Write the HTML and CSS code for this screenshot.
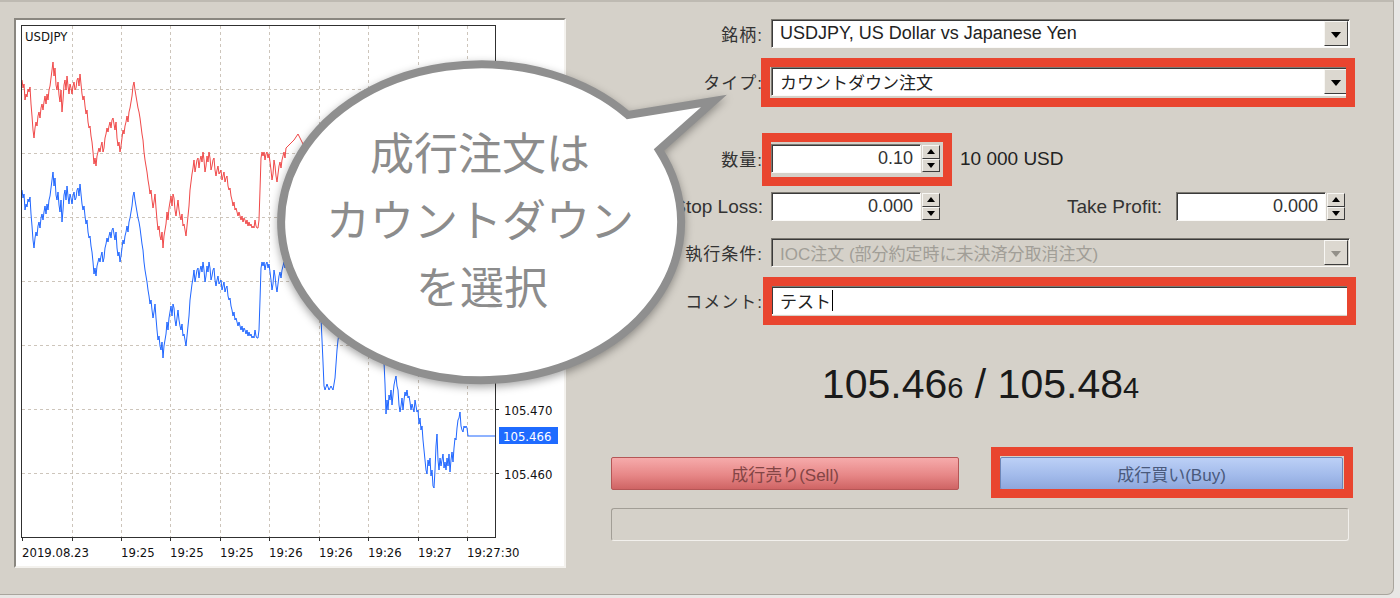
FILE: index.html
```html
<!DOCTYPE html>
<html lang="ja">
  <head>
    <meta charset="UTF-8" />
    <meta name="viewport" content="width=device-width, initial-scale=1.0" />
    <title>新規注文</title>
    <link rel="stylesheet" href="styles.css">
  </head>
  <body>
    <div class="window">
      <div class="chart">
        <svg width="548" height="546" viewBox="16 20 548 546">
          <defs>
            <polyline id="tick" points="22,190 23,198 24,194 25,210 26,204 27,207 28,199 29,202 30,197 31,214 32,226 33,240 34,248 35,238 36,232 37,236 38,226 39,222 40,228 41,218 42,214 43,220 44,212 45,206 46,214 47,204 48,210 49,200 50,196 51,188 52,180 53,172 54,186 55,178 56,195 57,200 58,192 59,205 60,212 61,200 62,222 63,210 64,195 65,190 66,200 67,186 68,196 69,204 70,194 71,198 72,204 73,196 74,192 75,200 76,198 77,190 78,188 79,196 80,184 81,194 82,204 83,210 84,206 85,216 86,224 87,220 88,232 89,238 90,236 91,246 92,252 93,262 94,274 95,268 96,276 97,266 98,262 99,258 100,262 101,256 102,252 103,262 104,258 105,248 106,244 107,238 108,242 109,236 110,232 111,238 112,230 113,228 114,234 115,240 116,232 117,248 118,256 119,252 120,262 121,256 122,248 123,240 124,244 125,236 126,232 127,226 128,232 129,222 130,218 131,212 132,206 133,196 134,192 135,200 136,206 137,212 138,218 139,222 140,228 141,236 142,244 143,250 144,262 145,270 146,276 147,282 148,290 149,296 150,304 151,300 152,310 153,318 154,312 155,304 156,318 157,330 158,340 159,336 160,346 161,350 162,342 163,358 164,346 165,340 166,334 167,322 168,330 169,318 170,312 171,306 172,316 173,304 174,308 175,320 176,326 177,318 178,310 179,320 180,326 181,330 182,324 183,336 184,334 185,340 186,346 187,336 188,326 189,316 190,300 191,292 192,284 193,278 194,270 195,282 196,276 197,270 198,268 199,278 200,270 201,266 202,272 203,262 204,270 205,282 206,276 207,266 208,272 209,262 210,268 211,280 212,276 213,270 214,268 215,280 216,286 217,280 218,276 219,284 220,282 221,280 222,290 223,286 224,282 225,292 226,288 227,286 228,296 229,300 230,298 231,306 232,310 233,316 234,312 235,320 236,318 237,322 238,326 239,322 240,326 241,330 242,326 243,332 244,328 245,330 246,334 247,330 248,336 249,332 250,336 251,334 252,338 253,336 254,338 255,330 256,336 257,338 258,338 259,330 260,300 261,268 262,262 263,266 264,262 265,270 266,264 267,262 268,268 269,264 270,272 271,280 272,290 273,284 274,270 275,276 276,286 277,292 278,284 279,276 280,272 281,278 282,270 283,266 284,262 285,268 286,258 290,254 294,250 298,244 302,252 306,260 310,270 314,286 318,300 321,318 322,340 323,362 324,386 325,390 327,384 329,390 331,386 333,390 335,378 336,364 337,350 338,340 339,334 342,318 348,300 356,292 364,298 372,314 380,338 384,362 385,384 386,414 387,400 388,410 389,395 390,400 391,390 392,405 393,395 394,385 395,380 396,376 397,386 398,390 399,405 400,412 401,406 402,398 403,410 404,400 405,392 406,396 407,390 408,398 409,396 410,402 411,410 412,404 413,408 414,412 415,400 416,406 417,412 418,410 419,424 420,418 421,430 422,426 423,440 424,450 425,460 426,470 427,474 428,460 429,466 430,458 431,476 432,470 433,486 434,488 435,470 436,446 437,434 438,460 439,470 440,458 441,466 442,460 443,454 444,468 445,462 446,470 447,458 448,466 449,454 450,472 451,460 452,452 453,462 454,448 455,438 456,440 457,428 458,420 459,418 460,412 461,426 462,430 463,432 464,426 465,428 466,426 467,428 468,436 495,436" />
          </defs>

          <g class="grid">
            <line x1="72.5" y1="26" x2="72.5" y2="537" />
            <line x1="121.5" y1="26" x2="121.5" y2="537" />
            <line x1="170.5" y1="26" x2="170.5" y2="537" />
            <line x1="220.5" y1="26" x2="220.5" y2="537" />
            <line x1="269.5" y1="26" x2="269.5" y2="537" />
            <line x1="319.5" y1="26" x2="319.5" y2="537" />
            <line x1="368.5" y1="26" x2="368.5" y2="537" />
            <line x1="418.5" y1="26" x2="418.5" y2="537" />
            <line x1="467.5" y1="26" x2="467.5" y2="537" />
            <line x1="22" y1="89.5" x2="495" y2="89.5" />
            <line x1="22" y1="153.5" x2="495" y2="153.5" />
            <line x1="22" y1="217.5" x2="495" y2="217.5" />
            <line x1="22" y1="281.5" x2="495" y2="281.5" />
            <line x1="22" y1="345.5" x2="495" y2="345.5" />
            <line x1="22" y1="409.5" x2="495" y2="409.5" />
            <line x1="22" y1="473.5" x2="495" y2="473.5" />
          </g>

          <use href="#tick" class="line-ask" transform="translate(0,-110)" />
          <use href="#tick" class="line-bid" />

          <rect class="frame" x="21.5" y="25.5" width="474" height="512" />

          <g class="ticks">
            <line x1="22.5" y1="537" x2="22.5" y2="541" />
            <line x1="72.5" y1="537" x2="72.5" y2="541" />
            <line x1="121.5" y1="537" x2="121.5" y2="541" />
            <line x1="170.5" y1="537" x2="170.5" y2="541" />
            <line x1="220.5" y1="537" x2="220.5" y2="541" />
            <line x1="269.5" y1="537" x2="269.5" y2="541" />
            <line x1="319.5" y1="537" x2="319.5" y2="541" />
            <line x1="368.5" y1="537" x2="368.5" y2="541" />
            <line x1="418.5" y1="537" x2="418.5" y2="541" />
            <line x1="467.5" y1="537" x2="467.5" y2="541" />
            <line x1="495" y1="409.5" x2="499" y2="409.5" />
            <line x1="495" y1="473.5" x2="499" y2="473.5" />
          </g>

          <g class="axis-text">
            <text x="25" y="41">USDJPY</text>
            <text x="504" y="415">105.470</text>
            <text x="504" y="479">105.460</text>
            <text x="22" y="557">2019.08.23</text>
            <text x="121" y="557">19:25</text>
            <text x="170" y="557">19:25</text>
            <text x="220" y="557">19:25</text>
            <text x="269" y="557">19:26</text>
            <text x="319" y="557">19:26</text>
            <text x="368" y="557">19:26</text>
            <text x="418" y="557">19:27</text>
            <text x="467" y="557">19:27:30</text>
          </g>

          <rect class="bid-box" x="499" y="427" width="59" height="17" />
          <text class="bid-text" x="503" y="441">105.466</text>
        </svg>
      </div>

      <div class="order">
        <div class="row row-symbol">
          <span class="label">銘柄:</span>
          <div class="field select lat">
            <span>USDJPY, US Dollar vs Japanese Yen</span>
            <span class="drop"></span>
          </div>
        </div>

        <div class="row row-type">
          <span class="label">タイプ:</span>
          <div class="field select mark mark-type">
            <span>カウントダウン注文</span>
            <span class="drop"></span>
          </div>
        </div>

        <div class="row row-volume">
          <span class="label">数量:</span>
          <div class="inline">
            <div class="spin mark mark-volume">
              <div class="field spin-input lat">0.10</div>
              <div class="spin-btns">
                <span class="spin-btn spin-up"></span>
                <span class="spin-btn spin-down"></span>
              </div>
            </div>
            <span class="unit">10 000 USD</span>
          </div>
        </div>

        <div class="row row-stops">
          <span class="label label-lat">Stop Loss:</span>
          <div class="inline stops">
            <div class="spin">
              <div class="field spin-input lat">0.000</div>
              <div class="spin-btns">
                <span class="spin-btn spin-up"></span>
                <span class="spin-btn spin-down"></span>
              </div>
            </div>
            <span class="label label-lat stops-label">Take Profit:</span>
            <div class="spin">
              <div class="field spin-input lat">0.000</div>
              <div class="spin-btns">
                <span class="spin-btn spin-up"></span>
                <span class="spin-btn spin-down"></span>
              </div>
            </div>
          </div>
        </div>

        <div class="row row-fill">
          <span class="label">執行条件:</span>
          <div class="field select is-disabled">
            <span>IOC注文 (部分約定時に未決済分取消注文)</span>
            <span class="drop"></span>
          </div>
        </div>

        <div class="row row-comment">
          <span class="label">コメント:</span>
          <div class="field comment mark mark-comment">
            <span>テスト</span>
            <span class="caret"></span>
          </div>
        </div>

        <div class="price">105.46<small>6</small> / 105.48<small>4</small></div>

        <div class="actions">
          <button type="button" class="btn btn-sell">成行売り(Sell)</button>
          <button type="button" class="btn btn-buy mark mark-buy">成行買い(Buy)</button>
        </div>

        <div class="status"></div>
      </div>
    </div>

    <svg class="bubble" width="1400" height="598" viewBox="0 0 1400 598">
      <path class="bubble-shape" d="M 628 115 A 200 158 0 1 0 659 150 L 714 101 Z" />
      <text x="480" y="170">成行注文は</text>
      <text x="480" y="237">カウントダウン</text>
      <text x="482" y="304">を選択</text>
    </svg>
  </body>
</html>
```

FILE: styles.css
```css
* {
  box-sizing: border-box;
}

body {
  margin: 0;
  width: 1400px;
  height: 598px;
  position: relative;
  overflow: hidden;
  background: #e8e7e5;
  font-family: "Liberation Sans", "Noto Sans CJK JP", sans-serif;
  color: #222;
}

.window {
  display: flex;
  align-items: flex-start;
  width: 1394px;
  height: 595px;
  padding: 16px 0 0 14px;
  background: #d5d1c9;
  border-top: 2px solid #bebab2;
  border-right: 1px solid #a9a59d;
  border-bottom: 1px solid #a9a59d;
  border-bottom-right-radius: 7px;
}

/* chart */

.chart {
  flex: none;
  width: 552px;
  height: 550px;
  background: #fff;
  border: 2px solid;
  border-color: #8a8780 #f4f2ee #f4f2ee #8a8780;
}

.chart svg {
  display: block;
}

.grid line {
  stroke: #cdc5bb;
  stroke-width: 1;
  stroke-dasharray: 3 3;
}

.line-ask,
.line-bid {
  fill: none;
  stroke-width: 1;
}

.line-ask {
  stroke: #f04848;
}

.line-bid {
  stroke: #1f66ff;
}

.frame {
  fill: none;
  stroke: #303030;
  stroke-width: 1;
}

.ticks line {
  stroke: #303030;
  stroke-width: 1;
}

.axis-text text,
.bid-text {
  font-family: "DejaVu Sans Condensed", "DejaVu Sans", sans-serif;
  font-size: 13px;
  fill: #111;
}

.bid-box {
  fill: #1f6bff;
}

.bid-text {
  fill: #fff;
}

/* order form */

.order {
  flex: none;
  width: 739px;
  margin-left: 45px;
  display: flex;
  flex-direction: column;
}

.row {
  display: grid;
  grid-template-columns: 152px 579px;
  column-gap: 8px;
  align-items: center;
  height: 29px;
}

.row-symbol { margin-top: 1px; }
.row-type { margin-top: 19px; }
.row-volume { margin-top: 48px; }
.row-stops { margin-top: 19px; }
.row-fill { margin-top: 17px; }
.row-comment { margin-top: 19px; }

.label {
  text-align: right;
  font-size: 17px;
  letter-spacing: 1px;
  color: #333;
  white-space: nowrap;
}

.label-lat {
  font-size: 19px;
  letter-spacing: 0;
}

.lat {
  font-size: 18px;
}

.field {
  position: relative;
  display: flex;
  align-items: center;
  height: 29px;
  padding-left: 8px;
  background: #fff;
  border: 1px solid;
  border-color: #7c7972 #fbfaf8 #fbfaf8 #7c7972;
  box-shadow: inset 1px 1px 0 #3a3a3a;
  font-size: 17px;
  white-space: nowrap;
}

.field.lat {
  font-size: 18px;
}

.drop {
  display: flex;
  align-items: center;
  justify-content: center;
  width: 24px;
  height: 25px;
  margin-left: auto;
  margin-right: 1px;
  background: #dcd8d0;
  border: 1px solid;
  border-color: #f8f7f4 #3c3c3c #3c3c3c #f8f7f4;
}

.drop::before {
  content: "";
  border-left: 5px solid transparent;
  border-right: 5px solid transparent;
  border-top: 6px solid #000;
  margin-top: 2px;
}

.select.is-disabled {
  background: #d5d1c9;
  color: #a19e97;
}

.select.is-disabled .drop::before {
  border-top-color: #939089;
}

.inline {
  display: flex;
  align-items: center;
}

.stops {
  padding-right: 5px;
}

.stops-label {
  flex: 1;
  margin-right: 14px;
}

.spin {
  position: relative;
  display: flex;
  flex: none;
  width: 169px;
  height: 29px;
}

.spin-input {
  width: 150px;
  justify-content: flex-end;
  padding-right: 7px;
  color: #333;
}

.spin-btns {
  display: flex;
  flex-direction: column;
  width: 19px;
  padding: 1px 0 1px 1px;
}

.spin-btn {
  flex: 1;
  display: flex;
  align-items: center;
  justify-content: center;
  background: #dcd8d0;
  border: 1px solid;
  border-color: #f8f7f4 #3c3c3c #3c3c3c #f8f7f4;
}

.spin-btn::before {
  content: "";
  border-left: 4px solid transparent;
  border-right: 4px solid transparent;
}

.spin-up::before {
  border-bottom: 5px solid #000;
}

.spin-down::before {
  border-top: 5px solid #000;
}

.unit {
  margin-left: 20px;
  font-size: 19px;
  color: #222;
}

.caret {
  width: 1px;
  height: 21px;
  margin-left: 1px;
  background: #000;
}

/* highlight frames */

.mark {
  position: relative;
}

.mark::after {
  content: "";
  position: absolute;
  border: 9px solid #e9452f;
  pointer-events: none;
}

.mark-type::after { inset: -10px -6px -12px -11px; }
.mark-volume::after { inset: -11px -12px -13px -9px; }
.mark-comment::after { inset: -10px -7px -11px -9px; }
.mark-buy::after { inset: -11px -11px -9px -10px; }

.price {
  margin-top: 45px;
  height: 48px;
  line-height: 48px;
  text-align: center;
  font-size: 41px;
  color: #1a1a1a;
}

.price small {
  font-size: 29px;
}

.actions {
  display: flex;
  justify-content: space-between;
  margin-top: 49px;
  padding-right: 7px;
}

.btn {
  height: 33px;
  padding: 0;
  font-family: inherit;
  font-size: 17px;
  border-radius: 2px;
  cursor: pointer;
}

.btn-sell {
  width: 348px;
  color: #834545;
  background: linear-gradient(#f6abab, #e78787 55%, #cf6464);
  border: 1px solid #b55656;
}

.btn-buy {
  width: 343px;
  color: #4a5a7c;
  background: linear-gradient(#bcd0f6, #a3bbeb 55%, #8ea7dc);
  border: 1px solid #6d86b8;
}

.status {
  width: 738px;
  height: 33px;
  margin-top: 18px;
  border: 1px solid;
  border-color: #a29e96 #f2f0ec #f2f0ec #a29e96;
  border-radius: 3px;
}

/* callout */

.bubble {
  position: absolute;
  left: 0;
  top: 0;
  pointer-events: none;
}

.bubble-shape {
  fill: #fff;
  stroke: #8f8f8f;
  stroke-width: 8;
  stroke-linejoin: miter;
  stroke-miterlimit: 10;
  filter: drop-shadow(0 3px 4px rgba(0, 0, 0, 0.35));
}

.bubble text {
  font-family: "Noto Sans CJK JP", sans-serif;
  font-size: 44px;
  fill: #8c8c8c;
  text-anchor: middle;
}
```
